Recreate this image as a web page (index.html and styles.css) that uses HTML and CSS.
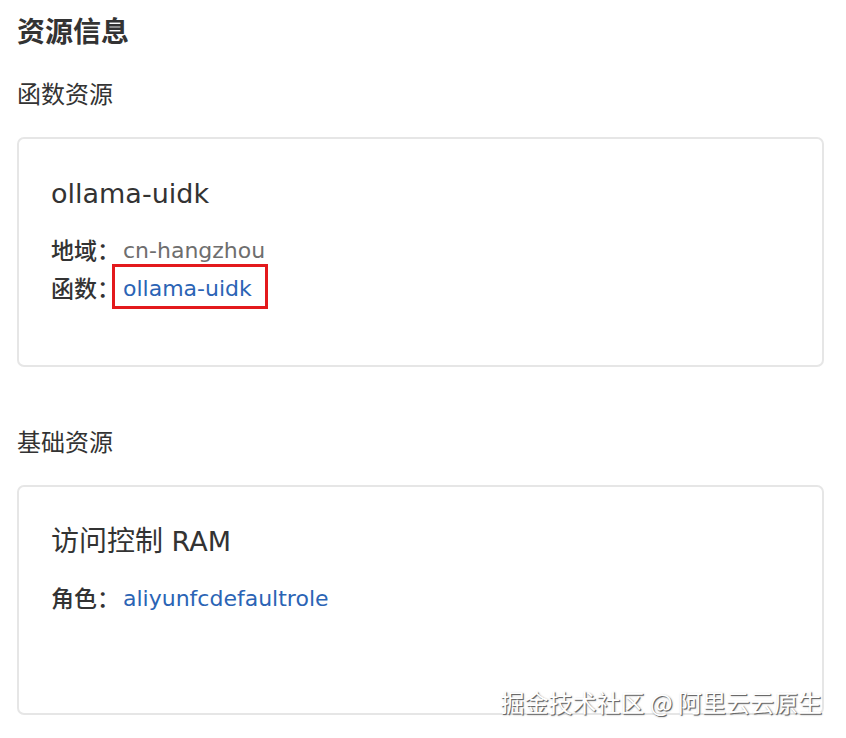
FILE: index.html
```html
<!DOCTYPE html>
<html lang="zh-CN">
<head>
<meta charset="utf-8">
<title>资源信息</title>
<link rel="stylesheet" href="styles.css">
</head>
<body>
<main class="page">
  <h1 class="page-title">资源信息</h1>

  <h2 class="section-title">函数资源</h2>
  <section class="card">
    <h3 class="card-title">ollama-uidk</h3>
    <div class="row"><span class="label">地域：</span><span class="value muted">cn-hangzhou</span></div>
    <div class="row"><span class="label">函数：</span><span class="value link hl">ollama-uidk</span></div>
  </section>

  <h2 class="section-title second">基础资源</h2>
  <section class="card">
    <h3 class="card-title"><span class="cjk">访问控制</span> RAM</h3>
    <div class="row"><span class="label">角色：</span><span class="value link">aliyunfcdefaultrole</span></div>
  </section>
</main>
<div class="watermark">掘金技术社区 @ 阿里云云原生</div>
</body>
</html>
```

FILE: styles.css
```css
html, body {
  margin: 0;
  padding: 0;
  background: #ffffff;
}

body {
  font-family: "DejaVu Sans", "Noto Sans CJK SC", sans-serif;
  color: #333333;
  position: relative;
  min-height: 738px;
}

.page {
  padding: 15px 22px 0 17px;
}

.page-title {
  margin: 0;
  font-size: 28px;
  line-height: 36px;
  font-weight: 700;
  color: #333333;
}

.section-title {
  margin: 28px 0 0;
  font-size: 24px;
  line-height: 32px;
  font-weight: 400;
  color: #333333;
}

.section-title.second {
  margin-top: 60px;
}

.card {
  margin-top: 26px;
  height: 230px;
  box-sizing: border-box;
  border: 2px solid #e6e6e6;
  border-radius: 7px;
  padding: 37px 32px 0;
}

.card-title {
  margin: 0 0 20px;
  font-size: 27px;
  line-height: 36px;
  font-weight: 400;
  color: #333333;
}

.card-title .cjk {
  font-size: 28px;
}

.row {
  display: flex;
  align-items: center;
  font-size: 22px;
  line-height: 38px;
  height: 38px;
}

.label {
  color: #333333;
  font-size: 23px;
  font-weight: 500;
  width: 72px;
  flex: none;
}

.value {
  display: inline-block;
  line-height: 38px;
}

.muted {
  color: #6e6e6e;
}

.link {
  color: #2b64b5;
}

.hl {
  position: relative;
}

.hl::after {
  content: "";
  position: absolute;
  left: -11px;
  right: -16px;
  top: -6px;
  bottom: -1px;
  border: 3px solid #e3191c;
}

.watermark {
  position: absolute;
  right: 24px;
  top: 686px;
  font-family: "Noto Sans CJK SC", sans-serif;
  font-size: 24px;
  line-height: 32px;
  color: #ffffff;
  text-shadow: 1px 1px 0 #6a6a6a, 1px 1px 2px #9a9a9a;
}
```
